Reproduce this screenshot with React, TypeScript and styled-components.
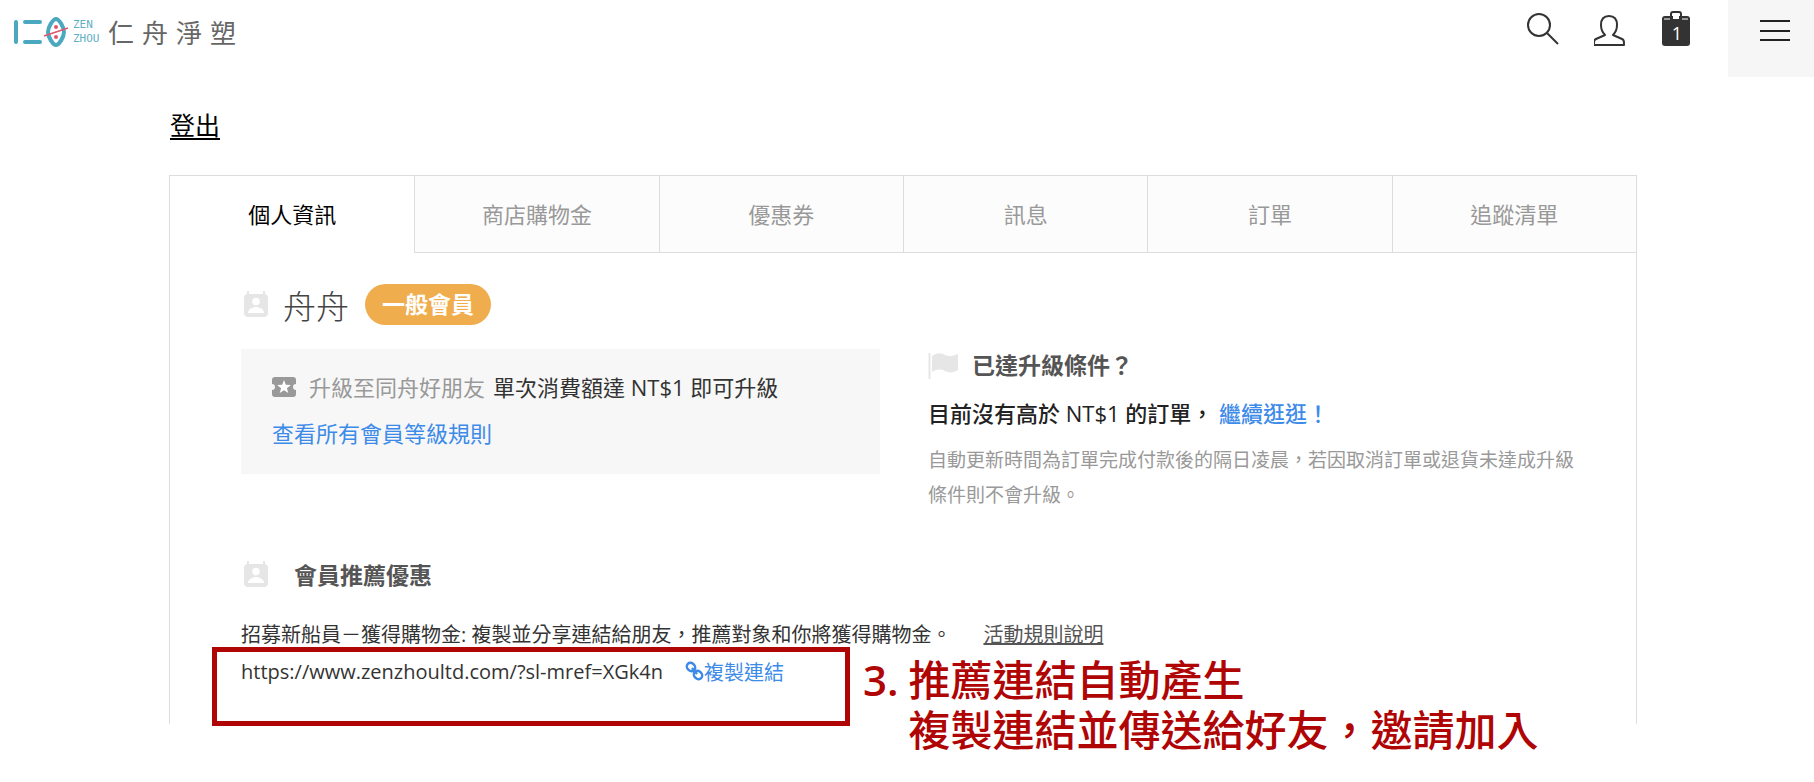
import React from 'react';
import styled, { createGlobalStyle } from 'styled-components';

const GlobalStyle = createGlobalStyle`
  * { box-sizing: border-box; }
  body {
    margin: 0;
    background: #fff;
    color: #333;
    font-family: "Open Sans", "Noto Sans CJK TC", sans-serif;
  }
  a { color: inherit; text-decoration: none; }
  h2, h3, p, ul { margin: 0; padding: 0; }
  button { border: 0; padding: 0; background: none; font: inherit; color: inherit; cursor: pointer; }
`;

const Header = styled.header`
  display: flex;
  justify-content: space-between;
  align-items: flex-start;
  height: 77px;
  padding-left: 13px;
`;

const Brand = styled.a`
  display: flex;
  align-items: center;
  height: 64px;
`;

const BrandMark = styled.svg`
  width: 56px;
  height: 32px;
`;

const BrandLatin = styled.span`
  margin-left: 4px;
  width: 34px;
  color: #5fb0c4;
  font: 11px/14px "DejaVu Sans Mono", monospace;
`;

const BrandName = styled.span`
  margin-left: 1px;
  color: #666;
  font-size: 26px;
  letter-spacing: 8px;
`;

const Tools = styled.nav`
  display: flex;
  align-items: flex-start;
`;

const ToolButton = styled.button`
  position: relative;
  width: 32px;
  height: 36px;
  margin: 11px 35px 0 0;
  svg { display: block; }
`;

const CartCount = styled.span`
  position: absolute;
  inset: 10px 0 0;
  color: #fff;
  font-size: 18px;
  line-height: 24px;
  text-align: center;
`;

const MenuButton = styled.button`
  display: flex;
  justify-content: center;
  width: 86px;
  height: 77px;
  padding: 20px 0 0 7px;
  background: #f6f6f6;
`;

const Page = styled.main`
  padding: 31px 177px 59px 169px;
`;

const Logout = styled.a`
  display: inline-block;
  margin-left: 1px;
  color: #000;
  font-size: 25px;
  line-height: 34px;
  text-decoration: underline;
  text-underline-offset: 3px;
  text-decoration-thickness: 2px;
`;

const Card = styled.section`
  margin-top: 33px;
  border: 1px solid #ddd;
  border-bottom: 0;
`;

const TabList = styled.div`
  display: grid;
  grid-template-columns: repeat(6, 1fr);
`;

const Tab = styled.button<{ $active?: boolean }>`
  height: 77px;
  padding-bottom: 3px;
  border-left: ${p => (p.$active ? '0' : '1px solid #ddd')};
  border-bottom: 1px solid ${p => (p.$active ? 'transparent' : '#ddd')};
  background: ${p => (p.$active ? '#fff' : '#fcfcfc')};
  color: ${p => (p.$active ? '#000' : '#999')};
  font-size: 22px;
`;

const Panel = styled.div`
  height: 471px;
  padding: 31px 60px 0 71px;
`;

const Profile = styled.div`
  display: flex;
  align-items: center;
  height: 41px;
`;

const UserName = styled.h2`
  margin-left: 14px;
  color: #444;
  font-size: 33px;
  font-weight: 300;
`;

const Badge = styled.span`
  margin-left: 16px;
  padding: 0 17px;
  border-radius: 21px;
  background: #f0ad4e;
  color: #fff;
  font-size: 23px;
  font-weight: 700;
  line-height: 41px;
`;

const Columns = styled.div`
  display: grid;
  grid-template-columns: 639fr 648fr;
  gap: 48px;
  margin-top: 24px;
`;

const LevelBox = styled.div`
  height: 125px;
  padding: 15px 31px;
  background: #f7f7f7;
  font-size: 22px;
  line-height: 46px;
`;

const LevelRow = styled.p`
  display: flex;
  align-items: center;
`;

const Muted = styled.span`
  margin: 0 8px 0 13px;
  color: #999;
`;

const BlueLink = styled.a`
  color: #3d8be8;
`;

const Heading = styled.h3`
  display: flex;
  align-items: center;
  color: #555;
  font-size: 23px;
  font-weight: 700;
  line-height: 32px;
`;

const HeadingText = styled.span<{ $gap: number }>`
  margin-left: ${p => p.$gap}px;
`;

const Condition = styled.p`
  margin-top: 15px;
  color: #222;
  font-size: 22px;
  font-weight: 500;
  line-height: 34px;
`;

const Note = styled.p`
  margin-top: 13px;
  color: #999;
  font-size: 19px;
  line-height: 35px;
`;

const Referral = styled.section`
  margin-top: 46px;
  font-size: 20px;
`;

const ReferralText = styled.p`
  margin-top: 26px;
  line-height: 36px;
`;

const RuleLink = styled.a`
  margin-left: 32px;
  color: #555;
  text-decoration: underline;
`;

const ShareRow = styled.div`
  position: relative;
  display: flex;
  align-items: center;
  height: 36px;
`;

const CopyButton = styled.button`
  display: flex;
  align-items: center;
  margin-left: 22px;
  color: #3d8be8;
`;

const Highlight = styled.div`
  position: absolute;
  top: -6px;
  left: -29px;
  width: 638px;
  height: 79px;
  border: 5px solid #b00505;
  pointer-events: none;
`;

const Callout = styled.div`
  position: absolute;
  top: 2px;
  left: 622px;
  display: flex;
  gap: 10px;
  color: #b00505;
  font-size: 42px;
  font-weight: 500;
  line-height: 50px;
  white-space: nowrap;
`;

const CalloutNumber = styled.span`
  font-weight: 600;
`;

const ContactIcon = () => (
  <svg width="28" height="28" viewBox="0 0 28 28" aria-hidden="true">
    <path fill="#e6e6e6" d="M6 0h2v3h14V0h2v3a4 4 0 0 1 3 4v15a4 4 0 0 1-4 4H7a4 4 0 0 1-4-4V7a4 4 0 0 1 3-4z" />
    <circle cx="15" cy="10.500" r="3.800" fill="#fff" />
    <path fill="#fff" d="M7 22c0-4 5-6 8-6s8 2 8 6z" />
  </svg>
);

const TicketIcon = () => (
  <svg width="24" height="20" viewBox="0 0 24 20" aria-hidden="true">
    <path fill="#999" d="M3 0h18a3 3 0 0 1 3 3v4a3 3 0 0 0 0 6v4a3 3 0 0 1-3 3H3a3 3 0 0 1-3-3v-4a3 3 0 0 0 0-6V3a3 3 0 0 1 3-3z" />
    <path fill="#fff" d="m12 3 1.800 4.800 5.100.2-4 3.200 1.400 4.900-4.300-2.800-4.300 2.800 1.400-4.900-4-3.200 5.100-.2z" />
  </svg>
);

const FlagIcon = () => (
  <svg width="30" height="27" viewBox="0 0 30 27" aria-hidden="true">
    <path stroke="#e6e6e6" strokeWidth="2" d="M1.500 1v26" />
    <path fill="#e6e6e6" d="M4 4c5-4 9-3 13-1s8 1 13-1v16c-5 3-9 3-13 1s-8-2-13 1z" />
  </svg>
);

const tabs = ['個人資訊', '商店購物金', '優惠券', '訊息', '訂單', '追蹤清單'];

export default function App() {
  return (
    <>
      <GlobalStyle />
      <Header>
        <Brand href="#">
          <BrandMark viewBox="0 0 56 32" fill="none" aria-hidden="true">
            <path stroke="#4aa9bf" strokeWidth="4" strokeLinecap="round" d="M3 6v20M12 6h15M12 26h15" />
            <path stroke="#4aa9bf" strokeWidth="4" strokeLinejoin="round" d="M43 3c-3 0-8 8-8 13s5 13 8 13 8-8 8-13-5-13-8-13z" />
            <path stroke="#e0566a" strokeWidth="1.500" d="m31 20 24-8" />
            <circle cx="43" cy="11" r="2" fill="#e0566a" />
            <circle cx="43" cy="21" r="2" fill="#e0566a" />
          </BrandMark>
          <BrandLatin>ZEN<br />ZHOU</BrandLatin>
          <BrandName>仁舟淨塑</BrandName>
        </Brand>
        <Tools>
          <ToolButton aria-label="搜尋">
            <svg width="32" height="34" viewBox="0 0 32 34" fill="none" stroke="#333" strokeWidth="2">
              <circle cx="12" cy="13" r="11" /><path d="m20 21 11 11" />
            </svg>
          </ToolButton>
          <ToolButton aria-label="會員">
            <svg width="32" height="36" viewBox="0 0 32 36" fill="none" stroke="#333" strokeWidth="2" strokeLinejoin="round">
              <path d="M11 24c-3-3-4-6-4-10 0-6 3-9 8-9s8 3 8 9c0 4-1 7-4 10l9 4c2 1 2 2 2 6H0c0-4 0-5 2-6z" />
            </svg>
          </ToolButton>
          <ToolButton aria-label="購物車">
            <svg width="32" height="36" viewBox="0 0 32 36">
              <rect x="1" y="5" width="28" height="30" rx="3" fill="#333" />
              <path d="M3 8h7M20 8h7" stroke="#fff" strokeWidth="1" />
              <path d="M10 9V3q0-2 2-2h6q2 0 2 2v6" fill="none" stroke="#333" strokeWidth="2" />
              <path d="M12 4h6v4h-6z" fill="#fff" />
            </svg>
            <CartCount>1</CartCount>
          </ToolButton>
          <MenuButton aria-label="選單">
            <svg width="30" height="21" viewBox="0 0 30 21" stroke="#222" strokeWidth="2"><path d="M0 1h30M0 11h30M0 20h30" /></svg>
          </MenuButton>
        </Tools>
      </Header>
      <Page>
        <Logout href="#">登出</Logout>
        <Card>
          <TabList role="tablist">
            {tabs.map((t, i) => (
              <Tab key={t} role="tab" aria-selected={i === 0} $active={i === 0}>{t}</Tab>
            ))}
          </TabList>
          <Panel role="tabpanel">
            <Profile>
              <ContactIcon />
              <UserName>舟舟</UserName>
              <Badge>一般會員</Badge>
            </Profile>
            <Columns>
              <LevelBox>
                <LevelRow><TicketIcon /><Muted>升級至同舟好朋友</Muted>單次消費額達 NT$1 即可升級</LevelRow>
                <BlueLink href="#">查看所有會員等級規則</BlueLink>
              </LevelBox>
              <div>
                <Heading><FlagIcon /><HeadingText $gap={14}>已達升級條件？</HeadingText></Heading>
                <Condition>目前沒有高於 NT$1 的訂單， <BlueLink href="#">繼續逛逛！</BlueLink></Condition>
                <Note>自動更新時間為訂單完成付款後的隔日凌晨，若因取消訂單或退貨未達成升級條件則不會升級。</Note>
              </div>
            </Columns>
            <Referral>
              <Heading><ContactIcon /><HeadingText $gap={25}>會員推薦優惠</HeadingText></Heading>
              <ReferralText>
                招募新船員－獲得購物金: 複製並分享連結給朋友，推薦對象和你將獲得購物金。
                <RuleLink href="#">活動規則說明</RuleLink>
              </ReferralText>
              <ShareRow>
                <span>https://www.zenzhoultd.com/?sl-mref=XGk4n</span>
                <CopyButton>
                  <svg width="19" height="20" viewBox="0 0 19 20" fill="none" stroke="#3d8be8" strokeWidth="2.500" aria-hidden="true">
                    <ellipse cx="6" cy="6" rx="4.500" ry="3.800" transform="rotate(45 6 6)" />
                    <ellipse cx="13" cy="14" rx="4.500" ry="3.800" transform="rotate(45 13 14)" />
                    <path d="m7 7 5 6" />
                  </svg>
                  複製連結
                </CopyButton>
                <Highlight />
                <Callout>
                  <CalloutNumber>3.</CalloutNumber>
                  <span>推薦連結自動產生<br />複製連結並傳送給好友，邀請加入</span>
                </Callout>
              </ShareRow>
            </Referral>
          </Panel>
        </Card>
      </Page>
    </>
  );
}
